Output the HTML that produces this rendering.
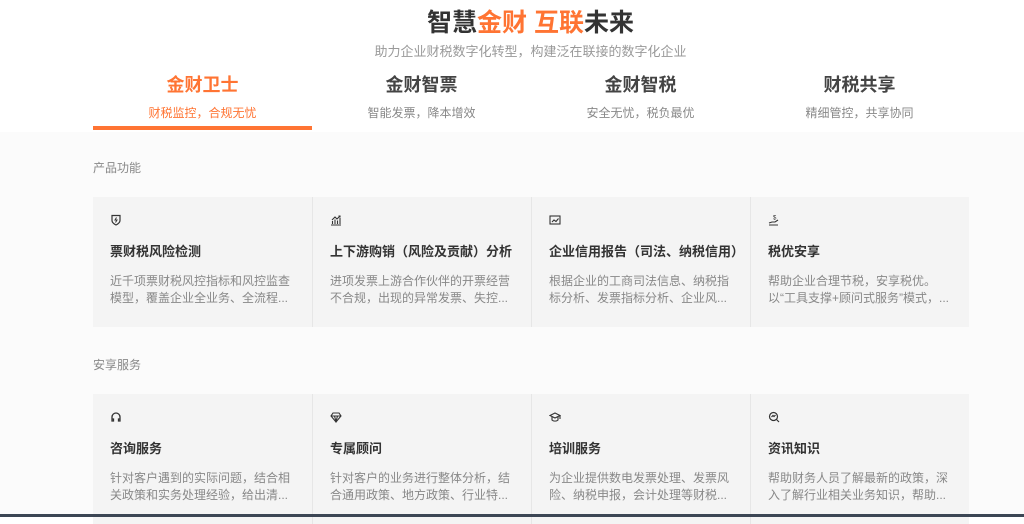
<!DOCTYPE html>
<html><head><meta charset="utf-8"><style>
*{margin:0;padding:0;box-sizing:border-box}
body{width:1024px;height:517px;overflow:hidden;background:#fff;font-family:"Liberation Sans","Noto Sans CJK SC",sans-serif;position:relative}
.bg{position:absolute;top:132px;left:0;right:0;bottom:0;background:#fbfbfb}
h1{position:absolute;top:3px;left:0;width:1061px;text-align:center;font-size:25px;font-weight:bold;color:#333}
h1 span{color:#ff7433}
.sub{position:absolute;top:41px;width:1061px;text-align:center;font-size:13px;color:#999}
.tab{position:absolute;top:72px;width:219px;text-align:center}
.tab b{display:block;font-size:18px;color:#444;line-height:26px}
.tab i{display:block;font-style:normal;font-size:12px;color:#888;margin-top:6px}
.tab.a b,.tab.a i{color:#ff7433}
.ul{position:absolute;left:93px;top:126px;width:219px;height:4px;background:#ff7433}
.lab{position:absolute;left:93px;font-size:12px;color:#888}
.row{position:absolute;left:93px;width:876px;display:flex}
.c{width:219px;height:130px;background:#f4f4f4;border-left:1px solid #e6e6e6;padding:17px 10px 0 17px}
.c:first-child{border-left:none}
.c svg{display:block;width:12px;height:12px}
.c h3{font-size:13px;color:#333;margin-top:17px;line-height:18px;white-space:nowrap}
.c p{font-size:12px;color:#888;line-height:17px;margin-top:12px;padding-right:6px}
.bar{position:absolute;left:0;right:0;top:514px;height:3px;background:#3c4654}
</style></head><body>
<div class="bg"></div>
<h1>智慧<span>金财 互联</span>未来</h1>
<div class="sub">助力企业财税数字化转型，构建泛在联接的数字化企业</div>
<div class="tab a" style="left:93px"><b>金财卫士</b><i>财税监控，合规无忧</i></div>
<div class="tab" style="left:312px"><b>金财智票</b><i>智能发票，降本增效</i></div>
<div class="tab" style="left:531px"><b>金财智税</b><i>安全无忧，税负最优</i></div>
<div class="tab" style="left:750px"><b>财税共享</b><i>精细管控，共享协同</i></div>
<div class="ul"></div>
<div class="lab" style="top:159px">产品功能</div>
<div class="row" style="top:197px">
<div class="c"><svg viewBox="0 0 12 12" fill="none" stroke="#333" stroke-width="1.2"><path d="M2 1.5h8v5c0 2-2 3.5-4 4.5C4 10 2 8.5 2 6.5z"/><path d="M6.5 3.5L5 6h2l-1.5 2.5" stroke-width="1"/></svg><h3>票财税风险检测</h3><p>近千项票财税风控指标和风控监查模型，覆盖企业全业务、全流程...</p></div>
<div class="c"><svg viewBox="0 0 12 12" fill="none" stroke="#333" stroke-width="1.1"><path d="M1 11h10M2.5 10V7M5 10V5.5M7.5 10V6.5M10 10V4M2 6l3-3 2 2 3-3M8.5 2H10v1.5"/></svg><h3>上下游购销（风险及贡献）分析</h3><p>进项发票上游合作伙伴的开票经营不合规，出现的异常发票、失控...</p></div>
<div class="c"><svg viewBox="0 0 12 12" fill="none" stroke="#333" stroke-width="1.1"><rect x="1" y="2" width="10" height="8"/><path d="M3 8l2-2 2 1.5 2.5-3"/></svg><h3>企业信用报告（司法、纳税信用）</h3><p>根据企业的工商司法信息、纳税指标分析、发票指标分析、企业风...</p></div>
<div class="c"><svg viewBox="0 0 12 12" fill="none" stroke="#333" stroke-width="1.1"><path d="M1 9l3-1h3l3-2M1 11h9"/><text x="5" y="5.5" font-size="6" fill="#333" stroke="none">$</text></svg><h3>税优安享</h3><p>帮助企业合理节税，安享税优。以“工具支撑+顾问式服务”模式，...</p></div>
</div>
<div class="lab" style="top:356px">安享服务</div>
<div class="row" style="top:394px">
<div class="c"><svg viewBox="0 0 12 12" fill="none" stroke="#333" stroke-width="1.3"><path d="M2 9V6a4 4 0 0 1 8 0v3M2 8h1.5v2H2zM8.5 8H10v2H8.5z"/></svg><h3>咨询服务</h3><p>针对客户遇到的实际问题，结合相关政策和实务处理经验，给出清...</p></div>
<div class="c"><svg viewBox="0 0 12 12" fill="none" stroke="#333" stroke-width="1.1"><path d="M3 2h6l2 3-5 6-5-6zM1 5h10M4.5 5L6 10.5 7.5 5"/></svg><h3>专属顾问</h3><p>针对客户的业务进行整体分析，结合通用政策、地方政策、行业特...</p></div>
<div class="c"><svg viewBox="0 0 12 12" fill="none" stroke="#333" stroke-width="1.1"><path d="M6 2L1 4.5 6 7l5-2.5zM3 6v3c1.5 1.5 4.5 1.5 6 0V6M11 4.5V8"/></svg><h3>培训服务</h3><p>为企业提供数电发票处理、发票风险、纳税申报，会计处理等财税...</p></div>
<div class="c"><svg viewBox="0 0 12 12" fill="none" stroke="#333" stroke-width="1.2"><circle cx="5.5" cy="5.5" r="4"/><path d="M8.5 8.5L11 11M3.5 6l1.5-1.5 1 1L7.5 4"/></svg><h3>资讯知识</h3><p>帮助财务人员了解最新的政策，深入了解行业相关业务知识，帮助...</p></div>
</div>
<div class="bar"></div>
</body></html>
